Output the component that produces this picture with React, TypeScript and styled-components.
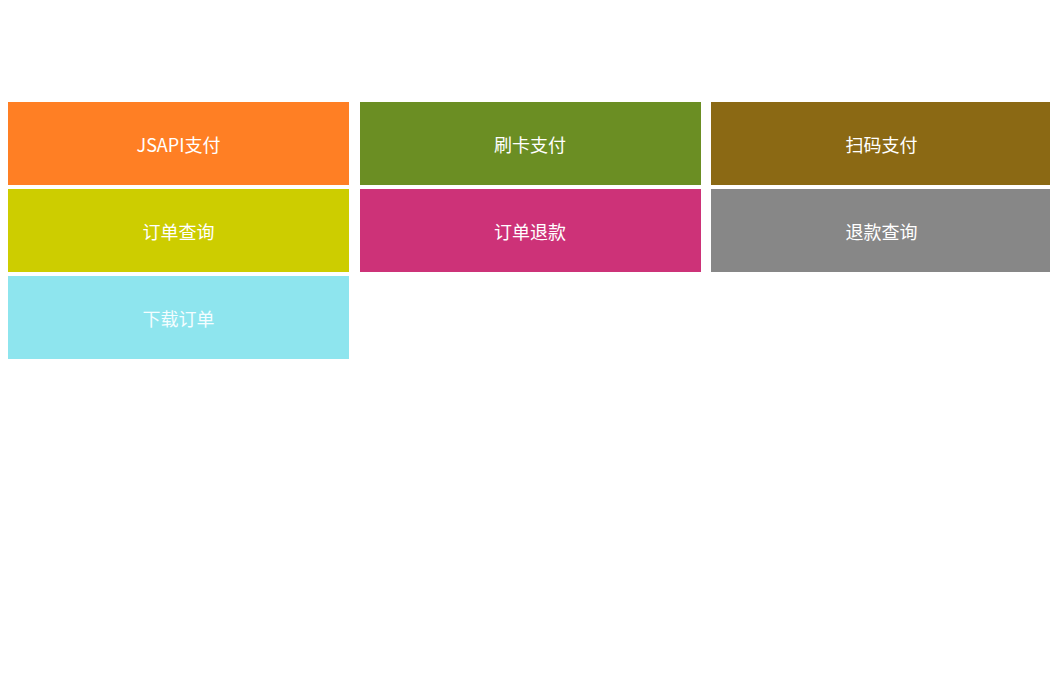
import React from "react";
import styled, { createGlobalStyle } from "styled-components";

const Global = createGlobalStyle`
  html, body { margin: 0; padding: 0; background: #ffffff; overflow: hidden; }
  body { font-family: "Noto Sans CJK SC", "Microsoft YaHei", "Noto Sans", sans-serif; }
`;

const Page = styled.div`
  width: 1050px;
  height: 700px;
  padding: 102px 0 0 8px;
  box-sizing: border-box;
  overflow: hidden;
`;

const Grid = styled.div`
  display: grid;
  grid-template-columns: repeat(3, 341px);
  column-gap: 10.5px;
  row-gap: 4px;
  width: 1100px;
`;

const Tile = styled.a<{ $bg: string; $fg?: string }>`
  display: flex;
  align-items: center;
  justify-content: center;
  height: 83px;
  background: ${(p) => p.$bg};
  color: ${(p) => p.$fg ?? "#ffffff"};
  font-size: 18px;
  text-decoration: none;
  cursor: pointer;
  letter-spacing: 0;
`;

const items: { label: string; bg: string; fg?: string }[] = [
  { label: "JSAPI支付", bg: "#FF7F24" },
  { label: "刷卡支付", bg: "#6B8E23" },
  { label: "扫码支付", bg: "#8B6914" },
  { label: "订单查询", bg: "#CDCD00" },
  { label: "订单退款", bg: "#CD3278" },
  { label: "退款查询", bg: "#878787" },
  { label: "下载订单", bg: "#8EE5EE", fg: "#f4fdff" },
];

export default function App() {
  return (
    <>
      <Global />
      <Page>
        <Grid>
          {items.map((it) => (
            <Tile key={it.label} $bg={it.bg} $fg={it.fg}>
              {it.label}
            </Tile>
          ))}
        </Grid>
      </Page>
    </>
  );
}
